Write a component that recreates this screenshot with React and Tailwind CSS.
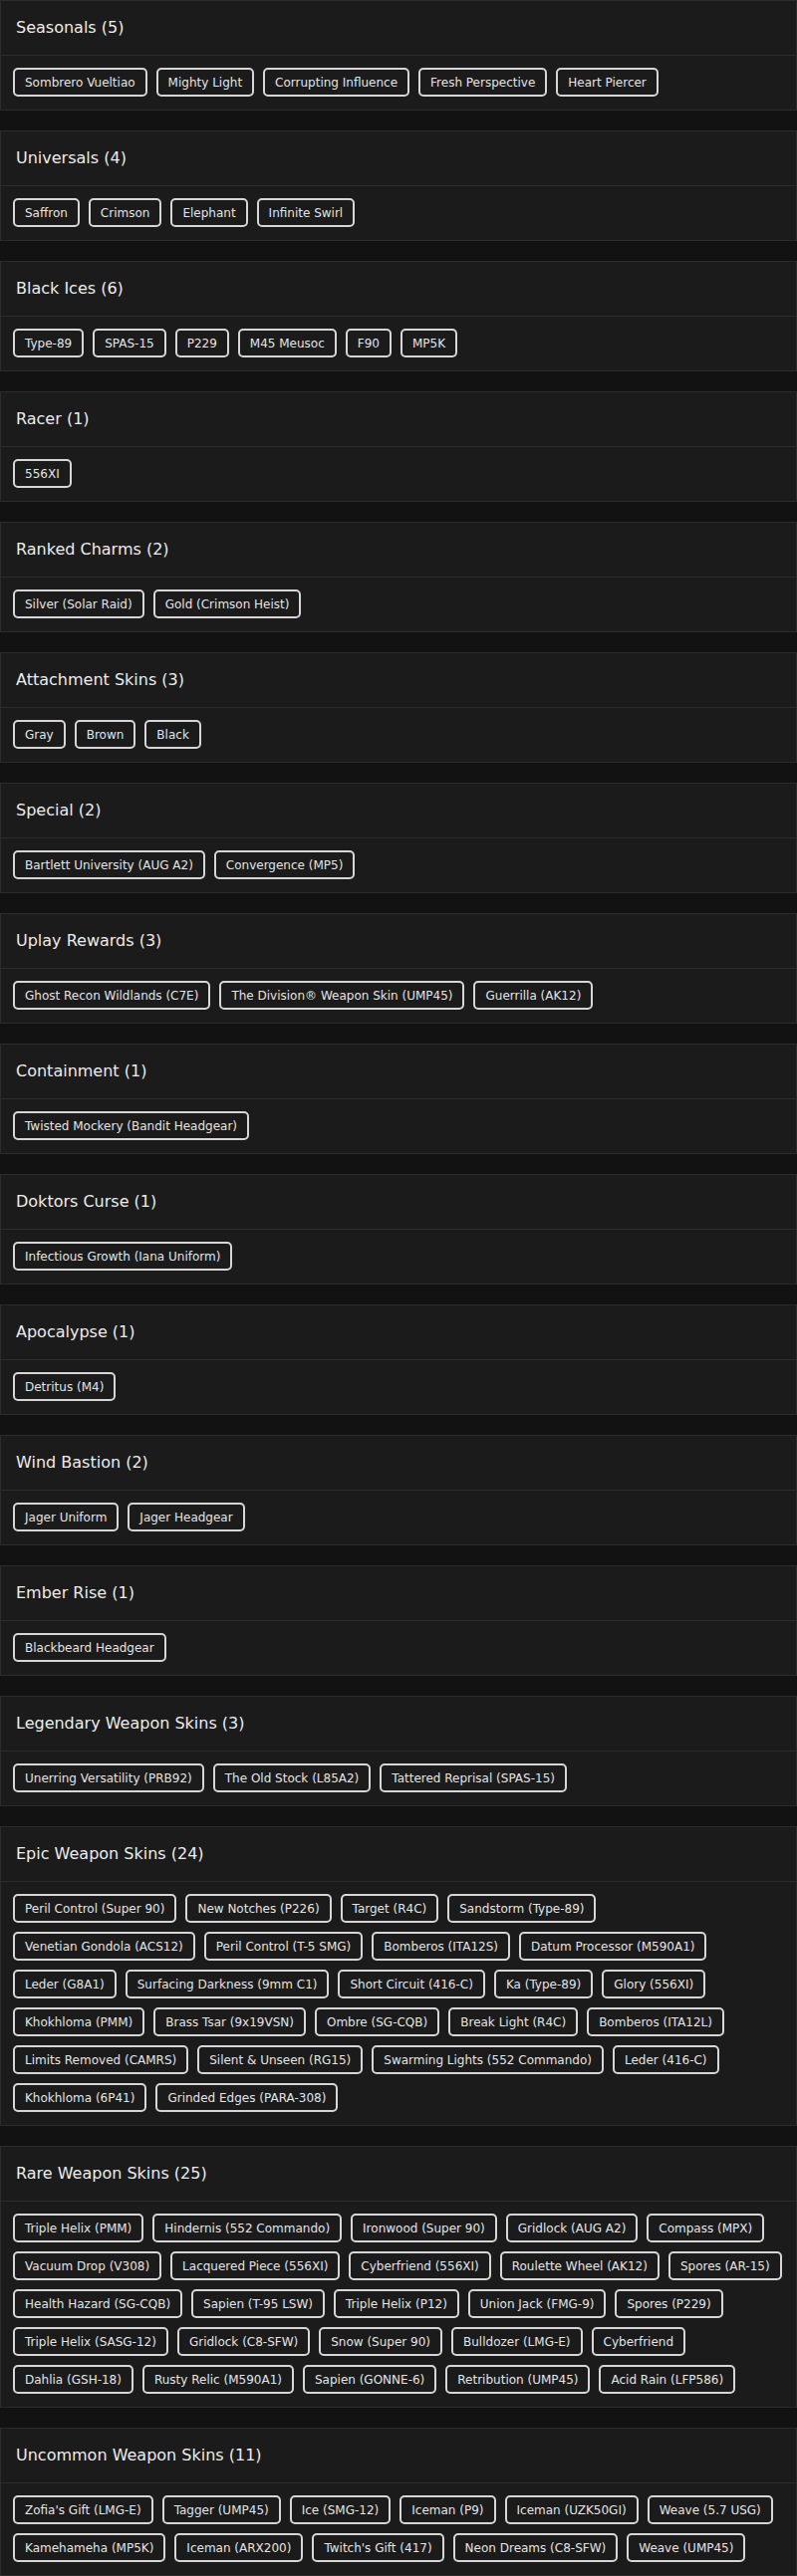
const sections = [
    { title: "Seasonals", rows: [["Sombrero Vueltiao", "Mighty Light", "Corrupting Influence", "Fresh Perspective", "Heart Piercer"]] },
    { title: "Universals", rows: [["Saffron", "Crimson", "Elephant", "Infinite Swirl"]] },
    { title: "Black Ices", rows: [["Type-89", "SPAS-15", "P229", "M45 Meusoc", "F90", "MP5K"]] },
    { title: "Racer", rows: [["556XI"]] },
    { title: "Ranked Charms", rows: [["Silver (Solar Raid)", "Gold (Crimson Heist)"]] },
    { title: "Attachment Skins", rows: [["Gray", "Brown", "Black"]] },
    { title: "Special", rows: [["Bartlett University (AUG A2)", "Convergence (MP5)"]] },
    { title: "Uplay Rewards", rows: [["Ghost Recon Wildlands (C7E)", "The Division® Weapon Skin (UMP45)", "Guerrilla (AK12)"]] },
    { title: "Containment", rows: [["Twisted Mockery (Bandit Headgear)"]] },
    { title: "Doktors Curse", rows: [["Infectious Growth (Iana Uniform)"]] },
    { title: "Apocalypse", rows: [["Detritus (M4)"]] },
    { title: "Wind Bastion", rows: [["Jager Uniform", "Jager Headgear"]] },
    { title: "Ember Rise", rows: [["Blackbeard Headgear"]] },
    { title: "Legendary Weapon Skins", rows: [["Unerring Versatility (PRB92)", "The Old Stock (L85A2)", "Tattered Reprisal (SPAS-15)"]] },
    {
        title: "Epic Weapon Skins", rows: [
            ["Peril Control (Super 90)", "New Notches (P226)", "Target (R4C)", "Sandstorm (Type-89)"],
            ["Venetian Gondola (ACS12)", "Peril Control (T-5 SMG)", "Bomberos (ITA12S)", "Datum Processor (M590A1)"],
            ["Leder (G8A1)", "Surfacing Darkness (9mm C1)", "Short Circuit (416-C)", "Ka (Type-89)", "Glory (556XI)"],
            ["Khokhloma (PMM)", "Brass Tsar (9x19VSN)", "Ombre (SG-CQB)", "Break Light (R4C)", "Bomberos (ITA12L)"],
            ["Limits Removed (CAMRS)", "Silent & Unseen (RG15)", "Swarming Lights (552 Commando)", "Leder (416-C)"],
            ["Khokhloma (6P41)", "Grinded Edges (PARA-308)"],
        ]
    },
    {
        title: "Rare Weapon Skins", rows: [
            ["Triple Helix (PMM)", "Hindernis (552 Commando)", "Ironwood (Super 90)", "Gridlock (AUG A2)", "Compass (MPX)"],
            ["Vacuum Drop (V308)", "Lacquered Piece (556XI)", "Cyberfriend (556XI)", "Roulette Wheel (AK12)", "Spores (AR-15)"],
            ["Health Hazard (SG-CQB)", "Sapien (T-95 LSW)", "Triple Helix (P12)", "Union Jack (FMG-9)", "Spores (P229)"],
            ["Triple Helix (SASG-12)", "Gridlock (C8-SFW)", "Snow (Super 90)", "Bulldozer (LMG-E)", "Cyberfriend"],
            ["Dahlia (GSH-18)", "Rusty Relic (M590A1)", "Sapien (GONNE-6)", "Retribution (UMP45)", "Acid Rain (LFP586)"],
        ]
    },
    {
        title: "Uncommon Weapon Skins", rows: [
            ["Zofia's Gift (LMG-E)", "Tagger (UMP45)", "Ice (SMG-12)", "Iceman (P9)", "Iceman (UZK50GI)", "Weave (5.7 USG)"],
            ["Kamehameha (MP5K)", "Iceman (ARX200)", "Twitch's Gift (417)", "Neon Dreams (C8-SFW)", "Weave (UMP45)"],
        ]
    },
];

const Chip = ({ label }) => (
    <span className="h-[29px] flex items-center px-[10px] border-2 border-[#d6d6d6] rounded-[5px] text-[12px] text-[#e4e4e4] whitespace-nowrap">
        {label}
    </span>
);

const Section = ({ s }) => {
    const count = s.rows.reduce((n, r) => n + r.length, 0);

    return (
        <div className="bg-[#1b1b1b] border border-[#2c2c2c]">
            <div className="h-[55px] flex items-center px-[15px] border-b border-[#2c2c2c]">
                <h2 className="text-[16px] text-[#ececec]">{s.title} ({count})</h2>
            </div>
            <div className="flex flex-col gap-[9px] pt-[12px] pb-[13px] px-[12px]">
                {s.rows.map((row, i) => (
                    <div key={i} className="flex gap-[9px]">
                        {row.map((item, j) => <Chip key={j} label={item} />)}
                    </div>
                ))}
            </div>
        </div>
    );
};

export default function App() {
    return (
        <div className="min-h-screen bg-[#121212] flex flex-col gap-[20px] font-['DejaVu_Sans',sans-serif]">
            {sections.map(s => <Section key={s.title} s={s} />)}
        </div>
    );
}
